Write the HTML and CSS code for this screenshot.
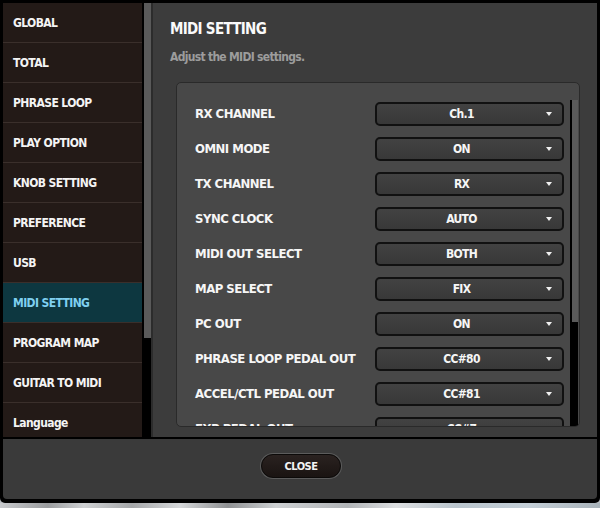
FILE: index.html
```html
<!DOCTYPE html>
<html>
<head>
<meta charset="utf-8">
<link rel="stylesheet" href="styles.css">
</head>
<body>
<div class="screen">
  <div class="window">
    <div class="body">
      <nav class="sidebar">
        <div class="nav-item">GLOBAL</div>
        <div class="nav-item">TOTAL</div>
        <div class="nav-item">PHRASE LOOP</div>
        <div class="nav-item">PLAY OPTION</div>
        <div class="nav-item">KNOB SETTING</div>
        <div class="nav-item">PREFERENCE</div>
        <div class="nav-item">USB</div>
        <div class="nav-item active">MIDI SETTING</div>
        <div class="nav-item">PROGRAM MAP</div>
        <div class="nav-item">GUITAR TO MIDI</div>
        <div class="nav-item">Language</div>
      </nav>
      <div class="side-scroll"><div class="side-thumb"></div></div>
      <main class="main">
        <h1 class="title">MIDI SETTING</h1>
        <p class="subtitle">Adjust the MIDI settings.</p>
        <section class="panel">
          <div class="list">
            <div class="row"><span class="label">RX CHANNEL</span><div class="select"><span class="value">Ch.1</span><span class="arrow"></span></div></div>
            <div class="row"><span class="label">OMNI MODE</span><div class="select"><span class="value">ON</span><span class="arrow"></span></div></div>
            <div class="row"><span class="label">TX CHANNEL</span><div class="select"><span class="value">RX</span><span class="arrow"></span></div></div>
            <div class="row"><span class="label">SYNC CLOCK</span><div class="select"><span class="value">AUTO</span><span class="arrow"></span></div></div>
            <div class="row"><span class="label">MIDI OUT SELECT</span><div class="select"><span class="value">BOTH</span><span class="arrow"></span></div></div>
            <div class="row"><span class="label">MAP SELECT</span><div class="select"><span class="value">FIX</span><span class="arrow"></span></div></div>
            <div class="row"><span class="label">PC OUT</span><div class="select"><span class="value">ON</span><span class="arrow"></span></div></div>
            <div class="row"><span class="label">PHRASE LOOP PEDAL OUT</span><div class="select"><span class="value">CC#80</span><span class="arrow"></span></div></div>
            <div class="row"><span class="label">ACCEL/CTL PEDAL OUT</span><div class="select"><span class="value">CC#81</span><span class="arrow"></span></div></div>
            <div class="row"><span class="label">EXP PEDAL OUT</span><div class="select"><span class="value">CC#7</span><span class="arrow"></span></div></div>
          </div>
          <div class="panel-scroll"><div class="panel-thumb"></div></div>
        </section>
      </main>
    </div>
    <footer class="footer">
      <button class="close">CLOSE</button>
    </footer>
  </div>
  <div class="desktop"></div>
</div>
</body>
</html>
```

FILE: styles.css
```css
* { box-sizing: border-box; }
html, body { margin: 0; padding: 0; }
body {
  width: 600px;
  height: 508px;
  overflow: hidden;
  background: #b9bcc0;
  font-family: "DejaVu Sans Condensed", "Liberation Sans Narrow", "Roboto Condensed", "Liberation Sans", sans-serif;
  font-stretch: condensed;
  font-weight: bold;
  color: #f2f2f2;
}
.screen {
  display: flex;
  flex-direction: column;
  height: 508px;
}
.window {
  width: 600px;
  height: 503px;
  background: #000;
  padding: 3px 3px 4px 3px;
  border-radius: 0 0 5px 5px;
  display: flex;
  flex-direction: column;
}
.body {
  height: 434px;
  display: flex;
}
.sidebar {
  width: 140px;
  background: #231a17;
  overflow: hidden;
  display: flex;
  flex-direction: column;
}
.nav-item {
  flex: none;
  height: 40px;
  line-height: 40px;
  padding-left: 10px;
  font-size: 12px;
  letter-spacing: -0.6px;
  border-bottom: 1px solid #3a2f2b;
  color: #f4f4f4;
  white-space: nowrap;
}
.nav-item.active {
  background: #0d3740;
  color: #7fd0f0;
}
.side-scroll {
  width: 11px;
  padding-left: 2px;
  background: #000;
  border-right: 2px solid #2c2c2c;
}
.side-thumb {
  width: 7px;
  height: 335px;
  background: #5a5a5a;
}
.main {
  flex: 1;
  background: #3c3c3c;
  padding: 16px 17px 10px 17px;
  display: flex;
  flex-direction: column;
}
.title {
  margin: 0;
  font-size: 15px;
  letter-spacing: -0.7px;
  line-height: 20px;
  color: #fafafa;
}
.subtitle {
  margin: 10px 0 17px 0;
  font-size: 12px;
  letter-spacing: -0.7px;
  line-height: 16px;
  color: #9c9c9c;
}
.panel {
  flex: 1;
  margin-left: 6px;
  background: #484848;
  border: 1px solid #2a2a2a;
  border-radius: 5px;
  overflow: hidden;
  display: flex;
}
.list {
  flex: 1;
  padding: 13px 0 0 18px;
  overflow: hidden;
}
.row {
  height: 35px;
  display: flex;
  align-items: center;
}
.label {
  width: 180px;
  font-size: 13px;
  letter-spacing: -0.5px;
  white-space: nowrap;
  color: #f6f6f6;
}
.select {
  width: 189px;
  height: 24px;
  border: 2px solid #111;
  border-radius: 5px;
  background: linear-gradient(#424242, #383838);
  display: flex;
  align-items: center;
  padding: 0 9px 0 9px;
}
.value {
  flex: 1;
  text-align: center;
  font-size: 12px;
  letter-spacing: -0.7px;
  padding-right: 9px;
  color: #f6f6f6;
}
.arrow {
  width: 0;
  height: 0;
  border-left: 3.5px solid transparent;
  border-right: 3.5px solid transparent;
  border-top: 4px solid #f0f0f0;
  margin-right: 1px;
}
.panel-scroll {
  width: 8px;
  margin: 17px 1px 0 6px;
  background: #000;
  padding-left: 2px;
}
.panel-thumb {
  width: 6px;
  height: 222px;
  background: #5a5a5a;
}
.footer {
  margin-top: 2px;
  height: 60px;
  background: #3a3a3a;
  display: flex;
  justify-content: center;
  padding-top: 15px;
  border-radius: 0 0 4px 4px;
}
.close {
  width: 80px;
  height: 24px;
  border-radius: 12px;
  border: 1px solid #0c0a09;
  box-shadow: 0 0 0 1px #5c5c5c;
  background: linear-gradient(#2a2220, #1a1412);
  color: #f4f4f4;
  font-family: inherit;
  font-stretch: condensed;
  font-weight: bold;
  font-size: 11px;
  letter-spacing: -0.5px;
  padding: 0;
  margin-left: 2px;
}
.desktop {
  flex: 1;
  background: linear-gradient(90deg, #c8cacd 0%, #9a9c9e 8%, #cfd1d3 14%, #a4a6a8 22%, #d6d8da 30%, #8e9092 38%, #cdd0d2 46%, #b0b3b6 58%, #dcdee0 66%, #b9c4cc 76%, #c3ced6 88%, #a9b3ba 100%);
}
```
